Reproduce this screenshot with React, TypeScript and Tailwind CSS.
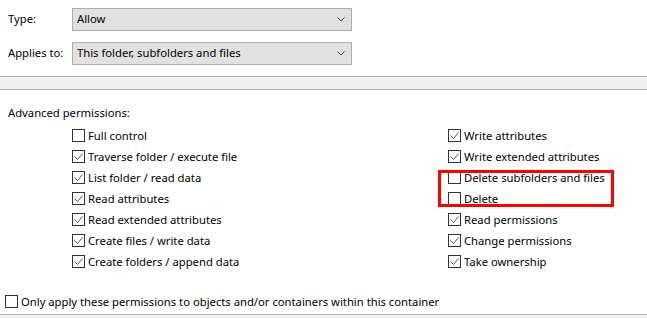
import React from 'react'

const left = [
    { label: 'Full control', checked: false },
    { label: 'Traverse folder / execute file', checked: true },
    { label: 'List folder / read data', checked: true },
    { label: 'Read attributes', checked: true },
    { label: 'Read extended attributes', checked: true },
    { label: 'Create files / write data', checked: true },
    { label: 'Create folders / append data', checked: true },
]

const right = [
    { label: 'Write attributes', checked: true },
    { label: 'Write extended attributes', checked: true },
    { label: 'Delete subfolders and files', checked: false },
    { label: 'Delete', checked: false },
    { label: 'Read permissions', checked: true },
    { label: 'Change permissions', checked: true },
    { label: 'Take ownership', checked: true },
]

function Box({ checked }: { checked: boolean }) {
    return (
        <span className="w-[13px] h-[13px] border border-[#333333] bg-white shrink-0 flex items-center justify-center">
            {checked && (
                <svg width="11" height="11" viewBox="0 0 11 11">
                    <path d="M1.5 5.5 L4.5 8.5 L9.5 2.5" fill="none" stroke="#555555" strokeWidth="1" />
                </svg>
            )}
        </span>
    )
}

function Check({ label, checked }: { label: string; checked: boolean }) {
    return (
        <div className="flex items-center h-[21px] gap-[3px]">
            <Box checked={checked} />
            <span className="leading-none">{label}</span>
        </div>
    )
}

function Select({ value }: { value: string }) {
    return (
        <div className="w-[280px] h-[23px] bg-[#e1e1e1] border border-[#adadad] flex items-center justify-between pl-[4px] pr-[6px]">
            <span>{value}</span>
            <svg width="8" height="5" viewBox="0 0 8 5">
                <path d="M0.5 0.5 L4 4 L7.5 0.5" fill="none" stroke="#404040" strokeWidth="1" />
            </svg>
        </div>
    )
}

export default function App() {
    return (
        <div className="relative w-[647px] h-[318px] bg-white text-black text-[11.25px] font-['Segoe_UI','Noto_Sans',sans-serif] overflow-hidden flex flex-col">
            <div className="flex flex-col gap-[11px] pt-[8px] pl-[8px]">
                <div className="flex items-center">
                    <span className="w-[64px]">Type:</span>
                    <Select value="Allow" />
                </div>
                <div className="flex items-center">
                    <span className="w-[64px]">Applies to:</span>
                    <Select value="This folder, subfolders and files" />
                </div>
            </div>

            <div className="mt-[11px] h-[14px] bg-[#f0f0f0] border-y border-[#b4b4b4]" />

            <div className="pl-[8px] mt-[15px] leading-[15px]">Advanced permissions:</div>

            <div className="flex mt-[5px]">
                <div className="flex flex-col pl-[72px] w-[448px]">
                    {left.map((p) => (
                        <Check key={p.label} {...p} />
                    ))}
                </div>
                <div className="flex flex-col">
                    {right.map((p) => (
                        <Check key={p.label} {...p} />
                    ))}
                </div>
            </div>

            <div className="pl-[5px] mt-[19px]">
                <Check label="Only apply these permissions to objects and/or containers within this container" checked={false} />
            </div>

            <div className="mt-auto h-[4px] bg-[#f0f0f0] border-t border-[#b4b4b4]" />

            <div className="absolute left-[438px] top-[170px] w-[176px] h-[37px] border-[3px] border-[#ff0000]" />
        </div>
    )
}
